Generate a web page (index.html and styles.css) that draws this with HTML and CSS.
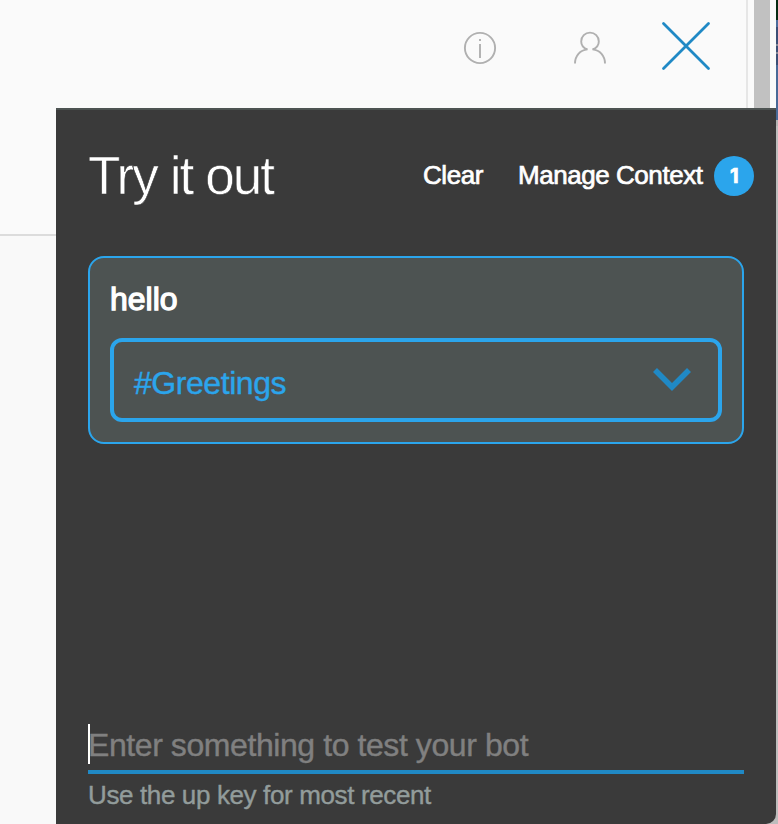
FILE: index.html
```html
<!DOCTYPE html>
<html lang="en">
<head>
<meta charset="utf-8">
<title>Try it out</title>
<link rel="stylesheet" href="styles.css">
</head>
<body>
<div class="window">
  <header class="toolbar">
    <svg class="icon" width="34" height="34" viewBox="0 0 34 34"><circle cx="17" cy="17" r="15.1"/><path d="M17 13v14M17 8v2"/></svg>
    <svg class="icon" width="34" height="34" viewBox="0 0 34 34"><path d="M2 32.500C2 25 7 19 14.500 18.400C10.500 17 8.200 14 8.200 10.400a8.800 8.800 0 0 1 17.600 0c0 3.600-2.300 6.600-6.300 8C27 19 32 25 32 32.500"/></svg>
    <svg class="icon close" width="52" height="52" viewBox="0 0 52 52"><path d="M3.500 3.500l45 45M48.500 3.500l-45 45"/></svg>
  </header>
  <div class="gutter"></div>
  <div class="track"></div>
</div>
<div class="desktop"></div>
<div class="page-rule"></div>
<main class="panel">
  <div class="heading">
    <h1>Try it out</h1>
    <nav><span class="clear">Clear</span><span class="context">Manage Context</span><span class="count">1</span></nav>
  </div>
  <section class="message">
    <p>hello</p>
    <div class="intent"><span>#Greetings</span>
      <svg class="chevron" width="38" height="24" viewBox="0 0 38 24"><path d="M2 2l17 17 17-17"/></svg>
    </div>
  </section>
  <footer class="entry">
    <div class="field">Enter something to test your bot</div>
    <div class="hint">Use the up key for most recent</div>
  </footer>
</main>
</body>
</html>
```
FILE: styles.css
```css
* { box-sizing: border-box; }
body {
  margin: 0;
  height: 824px;
  position: relative;
  overflow: hidden;
  background: #fafafa;
  font-family: "Liberation Sans", Arial, sans-serif;
}
.window { display: flex; height: 108px; width: 776px; }
.toolbar {
  width: 748px;
  height: 108px;
  padding: 20px 36px 0 0;
  border-right: 2px solid #e6e6e6;
  display: flex;
  justify-content: flex-end;
}
.icon { fill: none; stroke: #b0b0b0; stroke-width: 1.9; margin: 11px 76px 0 0; }
.close { stroke: #2089c5; stroke-width: 2.8; stroke-linecap: round; margin: 0 -2px 0 -23px; }
.gutter { width: 6px; }
.track { width: 16px; background: #c1c1c1; }
.desktop {
  position: absolute;
  top: 0;
  right: 0;
  width: 2px;
  height: 824px;
  background: linear-gradient(#052b12 20px, #4d6d9d 20px 27px, #3b4e75 27px 44px, #858a99 44px 46px, #3b4e75 46px 52px, #858a99 52px 54px, #3b4e75 54px 65px, #496997 65px 120px, #b4b4b4 120px 155px, #3a3a3a 155px 157px, #aaa 157px 270px, #999 270px 272px, #b4b4b4 272px 316px, #999 316px 318px, #bdbdbd 318px);
}
.page-rule {
  position: absolute;
  top: 234px;
  left: 0;
  width: 56px;
  height: 590px;
  border-top: 2px solid #dcdcdc;
  background: #f9f9f9;
}
.panel {
  position: relative;
  width: 720px;
  height: 716px;
  margin-left: 56px;
  padding: 0 32px;
  display: flex;
  flex-direction: column;
  background: #3a3a3a;
  border-top: 2px solid #4d5352;
  border-bottom-right-radius: 10px;
  box-shadow: 10px 10px 0 -8px #bdbdbd;
}
.heading { height: 146px; display: flex; justify-content: space-between; }
h1 {
  margin: 36px 0 0;
  font-size: 53px;
  line-height: 60px;
  font-weight: 400;
  letter-spacing: -1.9px;
  white-space: nowrap;
  color: #fff;
  -webkit-text-stroke: .6px #3a3a3a;
}
nav {
  display: flex;
  height: 40px;
  margin: 46px -10px 0 0;
  line-height: 38px;
  font-size: 26px;
  color: #fff;
  letter-spacing: -.45px;
  -webkit-text-stroke: .7px #fff;
}
.clear { width: 95px; }
.context { width: 196px; white-space: nowrap; }
.count {
  width: 40px;
  height: 40px;
  border-radius: 50%;
  background: #2ba5ec;
  text-align: center;
  font-family: Inter, sans-serif;
  font-size: 20px;
  font-weight: 700;
  line-height: 41px;
}
.message {
  height: 188px;
  padding: 20px;
  border: 2px solid #2ba5ec;
  border-radius: 16px;
  background: #4d5352;
}
.message p {
  margin: 0 0 20px;
  height: 40px;
  line-height: 42px;
  font-size: 32px;
  color: #fff;
  -webkit-text-stroke: 1.3px #fff;
}
.intent {
  height: 84px;
  border: 4px solid #2ba5ec;
  border-radius: 12px;
  padding: 0 27px 0 20px;
  display: flex;
  justify-content: space-between;
  font-size: 32px;
  line-height: 82px;
  letter-spacing: -.45px;
  color: #2ba5ec;
  -webkit-text-stroke: .4px #2ba5ec;
}
.chevron { margin-top: 26px; fill: none; stroke: #2089c5; stroke-width: 5.600; }
.entry { margin-top: auto; padding-bottom: 12px; }
.field {
  height: 50px;
  line-height: 42px;
  border-bottom: 4px solid #2089c5;
  font-size: 32px;
  letter-spacing: -.42px;
  color: #808080;
  -webkit-text-stroke: .4px #808080;
  background: linear-gradient(#fff, #fff) 0 0 / 2px 40px no-repeat;
}
.hint {
  height: 38px;
  line-height: 42px;
  font-size: 26px;
  letter-spacing: -.37px;
  color: #929c9b;
  -webkit-text-stroke: .4px #929c9b;
}
```
